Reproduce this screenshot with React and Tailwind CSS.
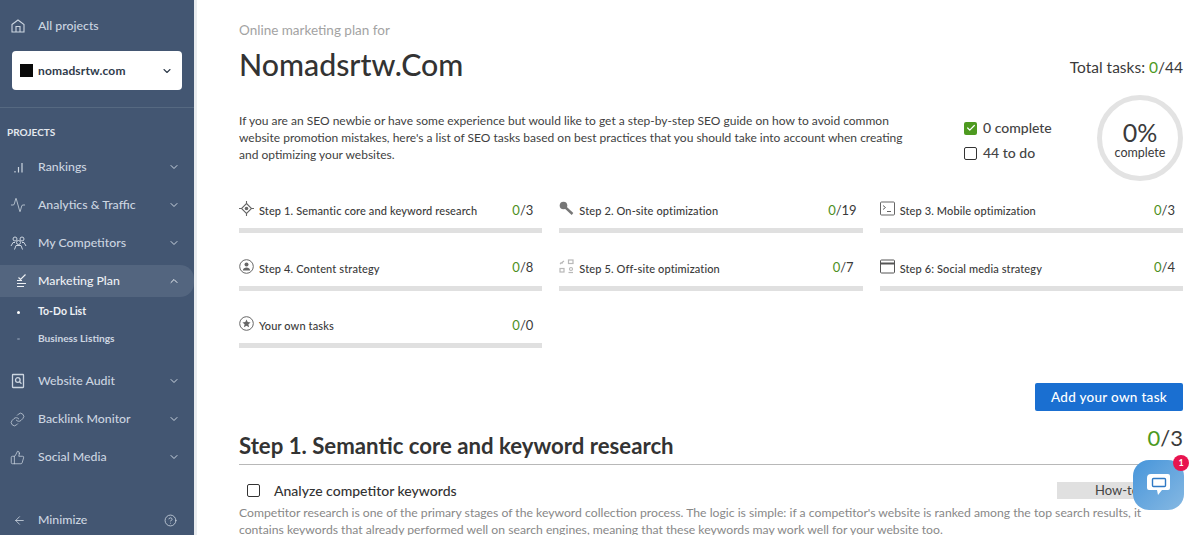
import React from "react";
import { ChevronDown, ChevronUp, Activity, Link, ThumbsUp, ArrowLeft, CircleHelp, Check } from "lucide-react";

const HomeIcon = () => (
  <svg width="16" height="16" viewBox="0 0 16 16" fill="none" stroke="currentColor" strokeWidth="1.1">
    <path d="M2 6.5L8 2l6 4.5V14H2zM6 14V8.5h4V14" />
  </svg>
);

const BarsIcon = () => (
  <svg width="16" height="16" viewBox="0 0 16 16" fill="none" stroke="currentColor" strokeWidth="1.2">
    <path d="M5 13.5v-1.5M8.5 13.5V8M12 13.5V4" />
  </svg>
);

const PeopleIcon = () => (
  <svg width="17" height="16" viewBox="0 0 17 16" fill="none" stroke="currentColor" strokeWidth="1">
    <circle cx="5" cy="4" r="2" />
    <circle cx="12" cy="4" r="2" />
    <circle cx="8.5" cy="7.5" r="2" />
    <path d="M1 11l2-3.5h2M16 11l-2-3.5h-2M4.5 14.5l1.5-4h5l1.5 4" />
  </svg>
);

const PlanIcon = () => (
  <svg width="16" height="16" viewBox="0 0 16 16" fill="none" stroke="currentColor" strokeWidth="1.2">
    <path d="M3 7.5h5M3 10.5h9M3 13.5h7M4.5 4.5l2 2L11.5 1.5" />
  </svg>
);

const AuditIcon = () => (
  <svg width="16" height="16" viewBox="0 0 16 16" fill="none" stroke="currentColor" strokeWidth="1.3">
    <rect x="2.5" y="1.5" width="11" height="13" rx="0.5" />
    <circle cx="7.8" cy="7" r="2.3" />
    <path d="M9.5 8.8l2 2" />
  </svg>
);

const TargetIcon = () => (
  <svg width="15" height="15" viewBox="0 0 15 15" fill="none" stroke="#666" strokeWidth="1.1">
    <path d="M7.5 2.5l5 5-5 5-5-5z" />
    <circle cx="7.5" cy="7.5" r="1.8" fill="#666" stroke="none" />
    <path d="M7.5 0v3M7.5 12v3M0 7.5h3M12 7.5h3" />
  </svg>
);

const KeyIcon = () => (
  <svg width="15" height="15" viewBox="0 0 15 15" fill="none">
    <circle cx="4.5" cy="4.5" r="3.8" fill="#777" />
    <path d="M6.5 6.5l7 6.5" stroke="#777" strokeWidth="2.4" />
  </svg>
);

const TerminalIcon = () => (
  <svg width="15" height="15" viewBox="0 0 15 15" fill="none" stroke="#666" strokeWidth="1">
    <rect x="0.5" y="1" width="14" height="13" rx="1" />
    <path d="M3 4.5l2.5 2L3 8.5M7 10.5h4" />
  </svg>
);

const PersonCircleIcon = () => (
  <svg width="15" height="15" viewBox="0 0 15 15" fill="none">
    <circle cx="7.5" cy="7.5" r="6.8" stroke="#666" strokeWidth="1" />
    <circle cx="7.5" cy="5.5" r="2" fill="#666" />
    <path d="M3.8 11.5c.4-2.2 1.8-3 3.7-3s3.3.8 3.7 3z" fill="#666" />
  </svg>
);

const OffsiteIcon = () => (
  <svg width="15" height="15" viewBox="0 0 15 15" fill="none" stroke="#b8b8b8" strokeWidth="1.2">
    <path d="M1 5l4-3M1 4h3" />
    <rect x="9.5" y="1" width="4.5" height="3.5" />
    <rect x="1" y="9.5" width="4" height="3.5" />
    <path d="M9.5 13.5h4.5" />
    <circle cx="12" cy="10" r="1.5" />
  </svg>
);

const WindowIcon = () => (
  <svg width="15" height="15" viewBox="0 0 15 15" fill="none" stroke="#555" strokeWidth="1">
    <rect x="0.5" y="1" width="14" height="13" rx="1" />
    <path d="M0.5 4.5h14" strokeWidth="2" />
  </svg>
);

const StarCircleIcon = () => (
  <svg width="15" height="15" viewBox="0 0 15 15" fill="none">
    <circle cx="7.5" cy="7.5" r="6.8" stroke="#666" strokeWidth="1" />
    <path d="M7.5 3.4l1.2 2.7 2.9.3-2.2 1.9.7 2.9-2.6-1.5-2.6 1.5.7-2.9-2.2-1.9 2.9-.3z" fill="#666" />
  </svg>
);

const menuTop = [
  { name: "Rankings", icon: <BarsIcon /> },
  { name: "Analytics & Traffic", icon: <Activity size={16} strokeWidth={1.2} /> },
  { name: "My Competitors", icon: <PeopleIcon /> },
];

const menuBottom = [
  { name: "Website Audit", icon: <AuditIcon /> },
  { name: "Backlink Monitor", icon: <Link size={15} strokeWidth={1.2} /> },
  { name: "Social Media", icon: <ThumbsUp size={15} strokeWidth={1.2} /> },
];

const steps = [
  { name: "Step 1. Semantic core and keyword research", total: 3, pad: "pr-[9px]", icon: <TargetIcon /> },
  { name: "Step 2. On-site optimization", total: 19, pad: "pr-[6px]", icon: <KeyIcon /> },
  { name: "Step 3. Mobile optimization", total: 3, pad: "pr-[8px]", icon: <TerminalIcon /> },
  { name: "Step 4. Content strategy", total: 8, pad: "pr-[9px]", icon: <PersonCircleIcon /> },
  { name: "Step 5. Off-site optimization", total: 7, pad: "pr-[9px]", icon: <OffsiteIcon /> },
  { name: "Step 6: Social media strategy", total: 4, pad: "pr-[8px]", icon: <WindowIcon /> },
  { name: "Your own tasks", total: 0, pad: "pr-[9px]", icon: <StarCircleIcon /> },
];

function MenuRow({ item }) {
  return (
    <div className="flex h-[38px] items-center pl-[10px] pr-[14px] text-[#ccd5e0]">
      <span className="flex w-[28px] shrink-0 items-center">{item.icon}</span>
      <span className="flex-1 text-[12.3px] font-medium">{item.name}</span>
      <ChevronDown size={12} strokeWidth={2} />
    </div>
  );
}

function Sidebar() {
  return (
    <aside className="flex h-[535px] w-[197px] shrink-0 flex-col border-r-[3px] border-[#e9ecef] bg-[#435672]">
      <div className="flex h-[51px] shrink-0 items-center pl-[10px] pt-[1px] text-[#ccd5e0]">
        <span className="flex w-[28px] items-center">
          <HomeIcon />
        </span>
        <span className="text-[12.3px] font-medium">All projects</span>
      </div>
      <div className="mx-[12px] flex h-[39px] items-center rounded-[4px] bg-white pl-[8px] pr-[9px] text-[#2f3b4b]">
        <span className="mr-[5px] h-[13px] w-[13px] bg-[#0a0a0a]" />
        <span className="flex-1 text-[12px] font-bold tracking-[0.15px]">nomadsrtw.com</span>
        <ChevronDown size={12} strokeWidth={2.2} />
      </div>
      <div className="mt-[17px] h-px bg-[#566981]" />
      <div className="flex h-[48px] shrink-0 items-center pl-[7px] text-[10px] font-bold text-[#e3e8ee]">PROJECTS</div>
      <div className="-mt-[8px]">
        {menuTop.map((item) => (
          <MenuRow key={item.name} item={item} />
        ))}
      </div>
      <div className="mt-[3px] flex h-[32px] items-center rounded-r-[14px] bg-[#53657f] pl-[14px] pr-[14px] text-[#eef1f5]">
        <span className="flex w-[24px] shrink-0 items-center">
          <PlanIcon />
        </span>
        <span className="flex-1 text-[12.3px] font-medium">Marketing Plan</span>
        <ChevronUp size={12} strokeWidth={2} />
      </div>
      <div className="flex h-[30px] items-center pl-[17px] text-[10.5px] font-bold text-[#eef1f5]">
        <span className="mr-[18px] h-[3px] w-[3px] rounded-full bg-white" />
        To-Do List
      </div>
      <div className="flex h-[24px] items-center pl-[17px] text-[10.2px] font-bold text-[#ccd5e0]">
        <span className="mr-[18px] h-[2px] w-[3px] rounded-full bg-[#71829a]" />
        Business Listings
      </div>
      <div className="mt-[11px]">
        {menuBottom.map((item) => (
          <MenuRow key={item.name} item={item} />
        ))}
      </div>
      <div className="mt-auto flex h-[31px] items-center pl-[13px] pr-[17px] pt-[1px] text-[#ccd5e0]">
        <span className="flex w-[25px] shrink-0 items-center">
          <ArrowLeft size={13} strokeWidth={1.5} />
        </span>
        <span className="flex-1 text-[12.3px] font-medium">Minimize</span>
        <CircleHelp size={13} strokeWidth={1.5} />
      </div>
    </aside>
  );
}

function StepCard({ step }) {
  return (
    <div className="h-[57.5px]">
      <div className="flex h-[27px] items-center text-[#3a3a3a]">
        <span className="mr-[5px] flex w-[15px] shrink-0 -translate-y-[2px] justify-center">{step.icon}</span>
        <span className="flex-1 pt-[2px] text-[11px] font-medium tracking-[0.12px]">{step.name}</span>
        <span className={`text-[13px] ${step.pad}`}>
          <span className="text-[#4d8f1c]">0</span>/{step.total}
        </span>
      </div>
      <div className="mt-[4px] h-[5px] bg-[#e0e0e0]" />
    </div>
  );
}

export default function App() {
  return (
    <div className="flex h-[535px] w-[1200px] overflow-hidden bg-white font-['Lato','Liberation_Sans',sans-serif]">
      <Sidebar />
      <main className="relative flex-1 pl-[42px] pr-[17px]">
        <p className="pt-[22px] text-[13.5px] leading-[17px] text-[#a3a3a3]">Online marketing plan for</p>
        <div className="mt-[5px] flex items-end justify-between">
          <h1 className="text-[30.3px] font-medium leading-[40px] text-[#333]">Nomadsrtw.Com</h1>
          <div className="pb-[7px] text-[15.5px] leading-[20px] text-[#3a3a3a]">
            Total tasks: <span className="text-[#4d9a1f]">0</span>/44
          </div>
        </div>
        <div className="mt-[11px] flex items-center">
          <p className="mb-[2px] w-[680px] text-[12px] leading-[17px] text-[#3f3f3f]">
            If you are an SEO newbie or have some experience but would like to get a step-by-step SEO guide on how to avoid common
            website promotion mistakes, here's a list of SEO tasks based on best practices that you should take into account when creating
            and optimizing your websites.
          </p>
          <div className="ml-[45px] mt-[5px] flex flex-col gap-[9px] text-[14px] font-medium leading-[16px] text-[#444]">
            <div className="flex items-center gap-[6px]">
              <span className="flex h-[13px] w-[13px] items-center justify-center rounded-[2px] bg-[#4d9a1f] text-white">
                <Check size={10} strokeWidth={3} />
              </span>
              0 complete
            </div>
            <div className="flex items-center gap-[6px]">
              <span className="h-[13px] w-[13px] rounded-[2px] border-[1.5px] border-[#333]" />
              44 to do
            </div>
          </div>
          <div className="ml-auto flex h-[86px] w-[86px] flex-col items-center justify-center rounded-full border-[5px] border-[#e3e3e3] pt-[2px] text-[#3a3a3a]">
            <span className="text-[25px] leading-[28px]">0%</span>
            <span className="text-[12.5px] leading-[14px]">complete</span>
          </div>
        </div>
        <div className="mt-[16px] grid grid-cols-3 gap-x-[17px]">
          {steps.map((step) => (
            <StepCard key={step.name} step={step} />
          ))}
        </div>
        <div className="mt-[13px] flex justify-end">
          <button className="h-[28px] w-[148px] rounded-[2px] bg-[#1a6fd1] pt-[1px] text-[13.5px] font-medium tracking-[0.3px] text-white">
            Add your own task
          </button>
        </div>
        <div className="flex items-start justify-between border-b border-[#b8b8b8]">
          <h2 className="mt-[20px] pb-[3px] text-[22.2px] font-bold leading-[30px] text-[#333]">
            Step 1. Semantic core and keyword research
          </h2>
          <div className="mt-[14px] text-[22px] leading-[26px] text-[#3a3a3a]">
            <span className="text-[#4d9a1f]">0</span>/3
          </div>
        </div>
        <div className="mt-[17px] flex h-[17px] items-center pl-[8px]">
          <span className="mr-[14px] h-[13px] w-[13px] rounded-[2px] border-[1.5px] border-[#333]" />
          <span className="flex-1 text-[14px] font-medium text-[#333]">Analyze competitor keywords</span>
          <span className="h-[17px] w-[126px] bg-[#e0e0e0] pl-[38px] text-[13px] leading-[17px] text-[#444]">How-to</span>
        </div>
        <p className="mt-[5px] text-[12.2px] leading-[17px] text-[#888]">
          Competitor research is one of the primary stages of the keyword collection process. The logic is simple: if a competitor's
          website is ranked among the top search results, it contains keywords that already performed well on search engines,
          meaning that these keywords may work well for your website too.
        </p>
        <div className="absolute left-[936px] top-[460px] flex h-[50px] w-[51px] items-center justify-center rounded-[16px] bg-gradient-to-br from-[#4595da] to-[#85b8e2]">
          <svg width="26" height="28" viewBox="0 0 26 28" fill="none">
            <path d="M5 3h17a2 2 0 0 1 2 2v12a2 2 0 0 1-2 2h-6l-4 5-1-5H3a2 2 0 0 1-2-2V7a4 4 0 0 1 4-4z" fill="#fff" />
            <rect x="6.5" y="7.5" width="13" height="8" rx="1" stroke="#2f79c4" strokeWidth="1.4" />
          </svg>
          <span className="absolute -right-[5px] -top-[5px] flex h-[16px] w-[16px] items-center justify-center rounded-full bg-[#e8144f] text-[9px] font-bold text-white">
            1
          </span>
        </div>
      </main>
    </div>
  );
}
